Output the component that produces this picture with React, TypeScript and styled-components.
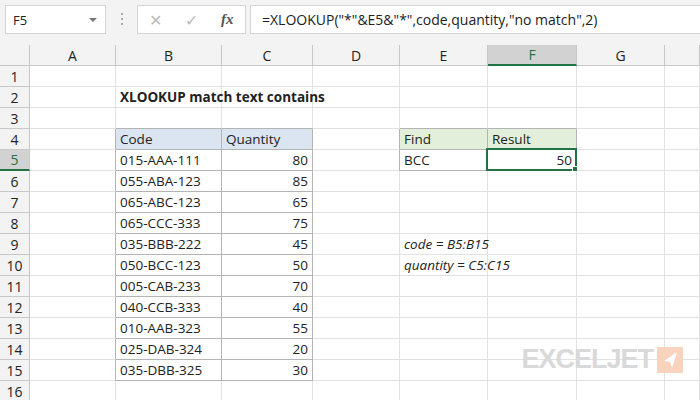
import React from "react";
import styled, { createGlobalStyle } from "styled-components";

const Global = createGlobalStyle`
  body { margin: 0; background: #fff; font-family: "Open Sans", "Liberation Sans", sans-serif; }
`;

const Page = styled.div`
  width: 700px; height: 400px; overflow: hidden; position: relative; background: #fff;
`;
const Bar = styled.div`
  height: 45px; background: #f3f3f3; display: flex; align-items: flex-start; padding-top: 5px; box-sizing: border-box; gap: 0;
`;
const NameBox = styled.div`
  margin-left: 5px; width: 101px; height: 29px; box-sizing: border-box; background: #fff; border: 1px solid #d4d4d4;
  display: flex; align-items: center; justify-content: space-between; padding: 0 8px 0 7px; font-size: 13px; color: #222;
`;
const Caret = styled.span`
  width: 0; height: 0; border-left: 4px solid transparent; border-right: 4px solid transparent; border-top: 4px solid #777;
`;
const Dots = styled.div`
  width: 31px; display: flex; flex-direction: column; align-items: center; gap: 3px; padding-top: 8px;
  span { width: 2px; height: 2px; background: #aaa; }
`;
const FxBox = styled.div`
  width: 109px; height: 29px; box-sizing: border-box; background: #fff; border: 1px solid #d4d4d4;
  display: flex; align-items: center; justify-content: space-around; color: #bbb; font-size: 16px;
`;
const Fx = styled.span` font-family: "Liberation Serif", serif; font-style: italic; color: #555; font-size: 15px; font-weight: bold;`;
const Formula = styled.div`
  margin-left: 4px; flex: 1; height: 29px; box-sizing: border-box; background: #fff; border: 1px solid #d4d4d4; border-right: none;
  display: flex; align-items: center; padding-left: 11px; font-size: 14px; color: #222; white-space: nowrap;
`;
const Grid = styled.div`
  display: grid; grid-template-columns: 30px 86px 106px 91px 87px 88px 89px 88px 35px; grid-auto-rows: 21px;
`;
type CellP = { $head?: boolean; $fill?: string; $align?: string; $br?: boolean; $bb?: boolean; $italic?: boolean; $hl?: boolean; $over?: boolean };
const Cell = styled.div<CellP>`
  box-sizing: border-box; position: relative;
  border-right: 1px solid ${p => (p.$br ? "#b4b4b4" : "#e1e1e1")};
  border-bottom: 1px solid ${p => (p.$bb ? "#b4b4b4" : "#e1e1e1")};
  background: ${p => p.$fill || (p.$head ? (p.$hl ? "#d2d2d2" : "#f3f3f3") : "#fff")};
  color: ${p => (p.$head && p.$hl ? "#217346" : "#222")};
  font-size: ${p => (p.$head ? "14px" : "13.5px")};
  font-style: ${p => (p.$italic ? "italic" : "normal")};
  display: flex; align-items: center; white-space: nowrap;
  justify-content: ${p => p.$align || "flex-start"};
  padding: 0 4px;
  ${p => p.$over && "overflow: visible; z-index: 1;"}
  ${p => p.$head && "border-color: #c8c8c8;"}
  ${p => p.$hl && "border-bottom: 2px solid #217346;"}
`;
const Sel = styled.div`
  position: absolute; inset: -2px -1px -1px -2px; border: 2px solid #217346; pointer-events: none;
  &::after { content: ""; position: absolute; right: -4px; bottom: -4px; width: 5px; height: 5px; background: #217346; border: 1px solid #fff; }
`;
const Logo = styled.div`
  position: absolute; right: 17px; top: 344px; display: flex; align-items: center; gap: 4px;
  font-family: "Liberation Sans", sans-serif; font-weight: 900; font-size: 27px; color: #d9d9d9; letter-spacing: -1px;
`;

const cols = ["A", "B", "C", "D", "E", "F", "G", ""];
const data: [string, number][] = [
  ["015-AAA-111", 80], ["055-ABA-123", 85], ["065-ABC-123", 65], ["065-CCC-333", 75], ["035-BBB-222", 45],
  ["050-BCC-123", 50], ["005-CAB-233", 70], ["040-CCB-333", 40], ["010-AAB-323", 55], ["025-DAB-324", 20], ["035-DBB-325", 30],
];

export default function App() {
  const rows: React.ReactNode[] = [];
  rows.push(<Cell key="h0" $head />);
  cols.forEach((c, i) => rows.push(<Cell key={"h" + c + i} $head $align="center" $hl={c === "F"}>{c}</Cell>));
  for (let r = 1; r <= 16; r++) {
    const cells: React.ReactNode[] = [];
    const tbl = r >= 4 && r <= 15;
    const code = r >= 5 && r <= 15 ? data[r - 5] : null;
    const B = r === 2 ? <b>XLOOKUP match text contains</b> : r === 4 ? "Code" : code ? code[0] : "";
    const C = r === 4 ? "Quantity" : code ? code[1] : "";
    let E: React.ReactNode = "", F: React.ReactNode = "";
    if (r === 4) { E = "Find"; F = "Result"; }
    if (r === 5) { E = "BCC"; F = "50"; }
    if (r === 9) E = "code = B5:B15";
    if (r === 10) E = "quantity = C5:C15";
    const ft = r === 4 || r === 5;
    const ital = r === 9 || r === 10;
    cells.push(<Cell key="rh" $head $align="center" $hl={r === 5}>{r}</Cell>);
    cells.push(<Cell key="A" $br={tbl} />);
    cells.push(<Cell key="B" $br={tbl} $bb={tbl || r === 3} $over={r === 2} $fill={r === 4 ? "#dbe5f1" : undefined}>{B}</Cell>);
    cells.push(<Cell key="C" $br={tbl} $bb={tbl || r === 3} $align={r === 4 ? "flex-start" : "flex-end"} $fill={r === 4 ? "#dbe5f1" : undefined}>{C}</Cell>);
    cells.push(<Cell key="D" $br={ft} />);
    cells.push(<Cell key="E" $br={ft} $bb={ft || r === 3} $italic={ital} $over={ital} $fill={r === 4 ? "#e2efda" : undefined}>{E}</Cell>);
    cells.push(<Cell key="F" $br={ft} $bb={ft || r === 3} $align={r === 5 ? "flex-end" : "flex-start"} $fill={r === 4 ? "#e2efda" : undefined}>{F}{r === 5 && <Sel />}</Cell>);
    cells.push(<Cell key="G" />);
    cells.push(<Cell key="H" />);
    rows.push(<React.Fragment key={r}>{cells}</React.Fragment>);
  }
  return (
    <Page>
      <Global />
      <Bar>
        <NameBox>F5<Caret /></NameBox>
        <Dots><span /><span /><span /></Dots>
        <FxBox><span>✕</span><span>✓</span><Fx>fx</Fx></FxBox>
        <Formula>=XLOOKUP("*"&amp;E5&amp;"*",code,quantity,"no match",2)</Formula>
      </Bar>
      <Grid>{rows}</Grid>
      <Logo>
        EXCELJET
        <svg width="26" height="26" viewBox="0 0 26 26">
          <rect width="26" height="26" fill="#f9d3bd" />
          <path d="M20 5 L7 14 L13 15 L15 21 Z" fill="#fff" />
        </svg>
      </Logo>
    </Page>
  );
}
